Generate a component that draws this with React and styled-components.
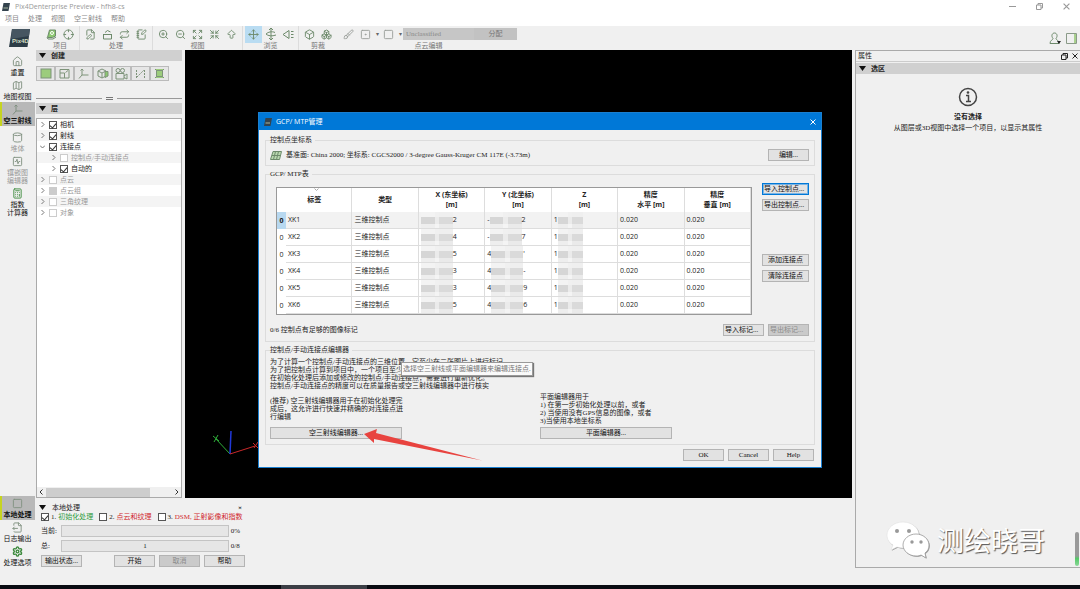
import React from "react";
import styled, { createGlobalStyle, css } from "styled-components";
import {
  ArrowBigUp,
  Box,
  Boxes,
  Brush,
  Calculator,
  Crosshair,
  Cylinder,
  Expand,
  FileOutput,
  FilePen,
  House,
  Map as MapIcon,
  Move,
  NotebookPen,
  Repeat,
  Settings,
  Shrink,
  Square,
  SquareActivity,
  SquareDot,
  ZoomIn,
  ZoomOut,
} from "lucide-react";

const song = '"Liberation Serif", "Noto Sans CJK SC", serif';
const segoe = '"Open Sans", "Noto Sans CJK SC", sans-serif';

const GlobalStyle = createGlobalStyle`
  * {
    box-sizing: border-box;
  }
  body {
    margin: 0;
    background: #f0f0f0;
    color: #222;
    font-family: ${song};
    font-size: 7px;
    line-height: 8px;
  }
  button, input, select {
    font: inherit;
    color: inherit;
    margin: 0;
  }
  svg {
    display: block;
    flex: none;
  }
`;

const Page = styled.div`
  position: relative;
  display: flex;
  flex-direction: column;
  min-height: 100vh;
  overflow: hidden;
`;

/* window chrome */

const TitleBar = styled.header`
  display: flex;
  align-items: center;
  gap: 5px;
  height: 13px;
  padding: 0 10px 0 2px;
  background: #fff;
  color: #999;
  font-family: ${segoe};
`;

const WindowControls = styled.div`
  display: flex;
  gap: 20px;
  margin-left: auto;
`;

const ChromeButton = styled.button`
  display: flex;
  padding: 0;
  border: 0;
  background: none;
  color: ${props => props.$color || "#999"};
`;

const MenuBar = styled.nav`
  display: flex;
  gap: 9px;
  height: 13px;
  padding: 2px 5px;
  background: #fff;
`;

const MenuLink = styled.a`
  color: #888;
  text-decoration: none;
`;

const Toolbar = styled.div`
  display: flex;
  height: 24px;
  background: #f0f0f0;
`;

const LogoCell = styled.div`
  width: 41px;
  padding: 2px 0 0 8px;
`;

const ToolGroup = styled.div`
  display: flex;
  flex-direction: column;
  padding: 0 2px;
  border-right: 1px solid ${props => (props.$open ? "transparent" : "#dcdcdc")};
  color: #777;
  text-align: center;
`;

const Tools = styled.div`
  display: flex;
  align-items: center;
  height: 16px;
`;

const Tool = styled.button`
  display: flex;
  align-items: center;
  justify-content: center;
  width: 17px;
  height: 17px;
  padding: 0;
  border: 0;
  color: ${props => (props.$muted ? "#9a9f9a" : "#6d8a6b")};
  background: ${props => (props.$active ? "#b9dcf2" : "none")};
`;

const Caret = styled.span`
  width: 6px;
  color: #666;
  font-size: 6px;
`;

const ClassSelect = styled.select`
  width: 71px;
  height: 12px;
  padding: 0 3px;
  border: 0;
  border-radius: 0;
  appearance: none;
  background: #c6c6c6;
  color: #8a8a8a;
  opacity: 1;
`;

const AssignButton = styled.button`
  width: 43px;
  height: 12px;
  padding: 0;
  border: 0;
  background: #c2c2c2;
  color: #777;
`;

const Account = styled.div`
  display: flex;
  align-items: center;
  gap: 5px;
  margin-left: auto;
  padding-right: 3px;
`;

/* main area */

const Main = styled.main`
  display: flex;
  flex: 1;
`;

const Rail = styled.nav`
  display: flex;
  flex-direction: column;
  width: 35px;
  margin-right: 1px;
  padding: 4px 0 17px;
`;

const RailGroup = styled.div`
  display: flex;
  flex-direction: column;
  margin-bottom: ${props => (props.$push ? "auto" : "4px")};

  &:last-child {
    margin-bottom: 0;
  }
`;

const RailButton = styled.button`
  display: flex;
  flex-direction: column;
  align-items: center;
  gap: 2px;
  width: 100%;
  padding: 2px 0 1px;
  border: 0;
  background: none;
  color: ${props => (props.disabled ? "#999" : "#111")};
  white-space: pre;

  svg {
    color: ${props => (props.$green ? "#3c8a3c" : "#809080")};
  }

  ${props => props.$active && css`
    background: #b8b8b8;
    box-shadow: inset 2px 0 #c6d420;
    font-weight: 700;
  `}
`;

const Center = styled.div`
  display: flex;
  flex: 1;
  flex-direction: column;
  min-width: 0;
`;

const Workspace = styled.div`
  display: flex;
  flex: 1;
  gap: 3px;
`;

const SideColumn = styled.aside`
  display: flex;
  flex-direction: column;
  width: 146px;
`;

const SectionHead = styled.h2`
  display: flex;
  align-items: center;
  gap: 5px;
  height: 11px;
  margin: 0;
  padding-left: 3px;
  background: #d0d0d0;
  font-size: 7px;
  font-weight: 700;
`;

const CreateTools = styled.div`
  display: flex;
  margin: 5px 0 16px;
`;

const CreateButton = styled.button`
  display: flex;
  align-items: center;
  justify-content: center;
  width: 19px;
  height: 15px;
  padding: 0;
  border: 1px solid #bbb;
  background: #e6e6e6;
  color: #7d9379;
`;

const Splitter = styled.div`
  display: flex;
  align-items: center;
  height: 2px;
  margin-bottom: 4px;

  &::before, &::after {
    content: "";
    flex: 1;
    height: 1px;
    background: #999;
  }
`;

const Grip = styled.span`
  width: 7px;
  height: 3px;
  margin: 0 4px;
  border: solid #777;
  border-width: 1px 0;
`;

const TreeBox = styled.div`
  display: flex;
  flex: 1;
  flex-direction: column;
  margin-top: 4px;
  border: 1px solid #aaa;
  background: #fff;
`;

const Tree = styled.ul`
  flex: 1;
  margin: 0;
  padding: 0;
  list-style: none;
`;

const TreeRow = styled.li`
  display: flex;
  align-items: center;
  gap: 4px;
  height: 11px;
  padding-left: ${props => 3 + props.$level * 11}px;
  color: ${props => (props.$off ? "#999" : "#222")};

  &:nth-child(even) {
    background: #f4f4f4;
  }
`;

const CheckLabel = styled.label`
  display: flex;
  align-items: center;
  gap: ${props => props.$gap || 3}px;
  white-space: nowrap;
`;

const Check = styled.input.attrs({ type: "checkbox" })`
  display: flex;
  flex: none;
  justify-content: center;
  width: 8px;
  height: 8px;
  border: 1px solid ${props => (props.$faint ? "#ccc" : "#555")};
  appearance: none;
  background: ${props => (props.$mixed ? "#ccc" : "#fff")};

  &:checked::after {
    content: "";
    width: 3px;
    height: 5px;
    border: solid #333;
    border-width: 0 1px 1px 0;
    transform: rotate(40deg);
  }
`;

const ScrollTrack = styled.div`
  display: flex;
  align-items: center;
  gap: 3px;
  height: 10px;
  padding: 0 2px;
  background: #f0f0f0;
`;

const ScrollThumb = styled.div`
  width: 104px;
  height: 9px;
  margin-right: auto;
  background: #cdcdcd;
`;

const Viewport = styled.section`
  position: relative;
  flex: 1;
  background: #000;
`;

const Axes = styled.svg`
  position: absolute;
  bottom: 38px;
  left: 25px;
`;

/* processing dock */

const Dock = styled.section`
  width: 209px;
  height: 87px;
  padding-top: 5px;
`;

const DockHead = styled.div`
  display: flex;
  align-items: center;
  gap: 6px;
  height: 9px;
  padding: 0 3px;
`;

const DockClose = styled.button`
  margin-left: auto;
  padding: 0;
  border: 0;
  background: none;
  font-weight: 700;
`;

const Steps = styled.div`
  display: flex;
  gap: 6px;
  height: 10px;
  padding-left: 5px;
`;

const StepName = styled.span`
  color: ${props => props.$color};
`;

const ProgressRow = styled.div`
  display: grid;
  grid-template-columns: 20px 168px 1fr;
  align-items: center;
  height: 12px;
  margin-top: 3px;
  padding-left: 5px;
`;

const Bar = styled.div`
  height: 12px;
  border: 1px solid #c4c4c4;
  background: #e6e6e6;
  line-height: 10px;
  text-align: center;
`;

const DockButtons = styled.div`
  display: flex;
  gap: 4px;
  margin-top: 3px;
  padding-left: 5px;
`;

const Button = styled.button`
  width: ${props => props.$width || 41}px;
  height: 12px;
  padding: 0 1px;
  overflow: hidden;
  border: 1px solid ${props => (props.$focus ? "#0078d7" : "#b4b4b4")};
  background: ${props => (props.disabled ? "#cacaca" : "#e2e2e2")};
  box-shadow: ${props => (props.$focus ? "inset 0 0 0 1px #7ab4e4" : "none")};
  color: ${props => (props.disabled ? "#8a8a8a" : "#111")};
  line-height: 10px;
  text-align: ${props => (props.$left ? "left" : "center")};
  white-space: nowrap;
`;

const StatusButton = styled(Button)`
  margin-right: auto;
`;

/* properties */

const Properties = styled.aside`
  width: 225px;
  margin: 0 0 17px 3px;
  border: solid #aaa;
  border-width: 1px 0 1px 1px;
`;

const PropertiesHead = styled.div`
  display: flex;
  align-items: center;
  gap: 4px;
  height: 11px;
  margin-bottom: 1px;
  padding: 0 2px;
  border-bottom: 1px solid #ccc;
`;

const HeadTitle = styled.span`
  margin-right: auto;
`;

const Empty = styled.div`
  display: flex;
  flex-direction: column;
  align-items: center;
  padding-top: 13px;
`;

const EmptyTitle = styled.strong`
  margin: 6px 0 3px;
`;

const PropertiesScroll = styled.div`
  position: absolute;
  right: 1px;
  bottom: 23px;
  width: 4px;
  height: 34px;
  border-radius: 2px;
  background: linear-gradient(#999 70%, #55c868 78%, #8ad898);
`;

const Watermark = styled.div`
  position: absolute;
  right: 35px;
  bottom: 30px;
  display: flex;
  align-items: center;
  gap: 7px;
  color: #fff;
  font-family: "Noto Sans CJK SC", sans-serif;
  font-size: 27px;
  line-height: 36px;
  text-shadow: 1px 1px 1px #555;
`;

const TaskBar = styled.footer`
  height: 4px;
  background: linear-gradient(90deg, #090b12 26%, #3b3e45 26%, #3b3e45 34%, #090b12 34%);
`;

/* dialog */

const Overlay = styled.div`
  position: absolute;
  inset: 0;
  display: flex;
  align-items: center;
  justify-content: center;
  padding-bottom: 9px;
`;

const Dialog = styled.section`
  position: relative;
  width: 564px;
  border: 1px solid #1a7fd0;
  background: #f0f0f0;
`;

const DialogTitle = styled.header`
  display: flex;
  align-items: center;
  justify-content: space-between;
  height: 17px;
  padding: 0 5px;
  background: #0078d7;
  color: #fff;
  font-family: ${segoe};
`;

const TitleText = styled.span`
  display: flex;
  gap: 4px;
`;

const DialogBody = styled.div`
  display: flex;
  flex-direction: column;
  gap: 3px;
  padding: 5px 6px 0;
`;

const GroupBox = styled.fieldset`
  min-width: 0;
  margin: 0;
  padding: ${props => props.$padding};
  border: 1px solid #dcdcdc;
`;

const Legend = styled.legend`
  padding: 0 3px 0 0;
  line-height: 10px;
`;

const SystemRow = styled.div`
  display: flex;
  align-items: center;
  gap: 4px;
`;

const SystemText = styled.span`
  margin-right: auto;
`;

const TableRow = styled.div`
  display: flex;
  gap: 10px;
  padding-left: 6px;
`;

const TableWrap = styled.div`
  flex: 1;
  min-width: 0;
  padding-top: 4px;
`;

const PointTable = styled.table`
  width: 100%;
  height: 128px;
  border: 1px solid #999;
  border-collapse: separate;
  border-spacing: 0;
  table-layout: fixed;
  background: #fff;
  font-family: ${segoe};

  th, td {
    padding: 0 0 0 2px;
    border: solid #ddd;
    border-width: 0 1px 1px 0;
    text-align: left;
    white-space: nowrap;
  }
  thead th {
    position: relative;
    height: 24px;
    padding: 0;
    border-bottom: 0;
    line-height: 10px;
    text-align: center;
  }
  tbody tr {
    height: 17px;
  }
  tbody th {
    padding: 0;
    border: 0;
    font-weight: 400;
    text-align: center;
  }
  tbody tr:first-child {
    background: #f2f2f2;
  }
  tbody tr:first-child th {
    background: #b7d8f0;
    font-weight: 700;
  }
`;

const Col = styled.col`
  width: ${props => props.$width};
`;

const SortMark = styled.svg`
  position: absolute;
  top: 0;
  left: 50%;
`;

const Masked = styled.div`
  display: flex;
  align-items: center;
  height: 16px;
`;

const Mosaic = styled.span`
  display: grid;
  grid-template-columns: 3fr 1fr 3fr;
  grid-template-rows: 5px 7px 4px;
  width: ${props => props.$width}px;
`;

const Pixel = styled.i`
  background: ${props => props.$shade};
`;

const SideButtons = styled.div`
  display: flex;
  flex-direction: column;
  gap: 4px;
`;

const LowerButtons = styled(SideButtons)`
  margin-top: 43px;
`;

const StatusRow = styled.div`
  display: flex;
  align-items: center;
  gap: 4px;
  margin-top: 9px;
`;

const Intro = styled.p`
  margin: 0;
  white-space: pre;
`;

const Editors = styled.div`
  display: grid;
  grid-template-columns: 1fr 1fr;
  grid-template-rows: 37px 12px;
  align-items: center;
`;

const DialogFooter = styled.footer`
  display: flex;
  gap: 4px;
  justify-content: flex-end;
  padding: 4px 7px 6px;
`;

const Tooltip = styled.div`
  position: absolute;
  top: 249px;
  left: 142px;
  padding: 2px 1px;
  border: 1px solid #999;
  background: #fafafa;
  box-shadow: 1px 1px 1px #777;
  color: #777;
  white-space: nowrap;
`;

const Arrow = styled.svg`
  position: absolute;
  top: 315px;
  left: 103px;
`;

const icon = { size: 11, strokeWidth: 2 };

const Triangle = () => (
  <svg width="7" height="5" viewBox="0 0 7 5"><path d="M0 0h7L3.500 5z" fill="#111" /></svg>
);

const CloseIcon = ({ size = 6 }) => (
  <svg width={size} height={size} viewBox="0 0 6 6" stroke="currentColor" fill="none">
    <path d="M.5.5l5 5M5.500.5l-5 5" />
  </svg>
);

const RestoreIcon = () => (
  <svg width="7" height="7" viewBox="0 0 7 7" stroke="currentColor" fill="none">
    <path d="M.5 2h4.500v4.500H.5zM2 2V.5h4.500V5H5" />
  </svg>
);

const Chevron = ({ open }) => (
  <svg width="5" height="5" viewBox="0 0 5 5" stroke="#777" fill="none">
    <path d={open ? "M0 1.500l2.500 2.500L5 1.500" : "M1.500 0L4 2.500 1.500 5"} />
  </svg>
);

const AppMark = ({ size = 8 }) => (
  <svg width={size} height={size} viewBox="0 0 8 8">
    <path d="M1.500 0H8L6.500 8H0z" fill="#34434e" />
    <path d="M1.500 5h4.500" stroke="#a8b8a0" />
  </svg>
);

const Logo = () => (
  <svg width="23" height="20" viewBox="0 0 23 20">
    <path d="M4 1h18l-2.500 18H1z" fill="#2c3c46" />
    <path d="M4 1h18l-1 7L3 11z" fill="#465661" />
    <text x="4" y="15" fill="#d5dfc4" fontFamily="Liberation Sans" fontSize="6" fontWeight="700">Pix4D</text>
  </svg>
);

const LayersGlyph = () => (
  <svg width="11" height="11" viewBox="0 0 11 11" fill="none" stroke="currentColor">
    <path d="M3.500 1h6v6l-3 1.500h-5z" fill="#8cc870" />
    <circle cx="6" cy="4" r="1.500" stroke="#fff" />
    <path d="M1 8.500l1 1.500h5l3-2" />
  </svg>
);

const TrayGlyph = () => (
  <svg width="11" height="11" viewBox="0 0 11 11" fill="none" stroke="currentColor">
    <path d="M1.500 5.500h8V10h-8zM1 5.500h9M3 3.500l2.500-2 3 1.500" />
  </svg>
);

const OrbitGlyph = () => (
  <svg width="12" height="12" viewBox="0 0 12 12" fill="none" stroke="currentColor">
    <path d="M6 0v12M4 2l2-2 2 2M4 10l2 2 2-2M10 4.500C7 3 3 4 1 6c2 2 6 2.500 10 1" />
  </svg>
);

const FirstPersonGlyph = () => (
  <svg width="12" height="11" viewBox="0 0 12 11" fill="none" stroke="currentColor">
    <path d="M7 1.500L1 5.500l6 4zM9 2.500h2.500M9 5.500h2.500M9 8.500h2.500" />
  </svg>
);

const AxesGlyph = ({ size = 11 }) => (
  <svg width={size} height={size} viewBox="0 0 11 11" fill="none" stroke="currentColor">
    <path d="M4 1v6h6.500M4 7L1 10.500M2.500 2.500L4 1l1.500 1.500" />
  </svg>
);

const OrthoGlyph = () => (
  <svg width="12" height="11" viewBox="0 0 12 11" fill="#9ccc7c" stroke="currentColor">
    <rect x="1" y="1" width="10" height="9" />
  </svg>
);

const ScaleGlyph = () => (
  <svg width="11" height="11" viewBox="0 0 11 11" fill="none" stroke="currentColor">
    <path d="M1 1.500h9v8.500H1zM1 5h4.500v5M6.500 4.500L9 2.500" />
  </svg>
);

const VolumeGlyph = () => (
  <svg width="12" height="11" viewBox="0 0 12 11" fill="none" stroke="currentColor">
    <path d="M1 3l4-2 4 2v5L5 10 1 8zM1 3l4 2v5M5 5l4-2" />
    <path d="M8 3.500h3V8L8 9.500z" fill="#8cc870" />
  </svg>
);

const CameraGlyph = () => (
  <svg width="13" height="12" viewBox="0 0 13 12" fill="none" stroke="currentColor">
    <circle cx="3" cy="2.500" r="2" />
    <circle cx="7.500" cy="2.500" r="2" />
    <path d="M1 5.500h8V11H1zM9 8l3-2v5L9 9.500" />
  </svg>
);

const PolylineGlyph = () => (
  <svg width="11" height="11" viewBox="0 0 11 11" fill="none" stroke="currentColor">
    <path d="M1.500 10V1.500M9.500 10V1.500M2 9l7-7" strokeDasharray="2 1" />
  </svg>
);

const SurfaceGlyph = () => (
  <svg width="11" height="11" viewBox="0 0 11 11" fill="#9ccc7c" stroke="currentColor">
    <path d="M1 1l1.500 1.500h6L10 1M1 10l1.500-1.500h6L10 10M2.500 2.500v6M8.500 2.500v6" />
    <path d="M2.500 2.500h6v6h-6z" />
  </svg>
);

const UserGlyph = () => (
  <svg width="12" height="13" viewBox="0 0 12 13" fill="none" stroke="#6d8a6b">
    <path d="M4 6.500C2 4 3 1 5.500 1S9 4 7 6.500c0 1.500 3 1.500 3 5H1c0-3.500 3-3.500 3-5z" />
    <path d="M8 9h4l-2 3z" fill="#222" stroke="none" />
  </svg>
);

const PanelGlyph = () => (
  <svg width="11" height="11" viewBox="0 0 11 11" fill="none" stroke="#8a9a88">
    <path d="M.5.5h10v10H.5z" />
    <path d="M8 1h2v9H8z" fill="#a9d08e" stroke="none" />
  </svg>
);

const InfoIcon = () => (
  <svg width="20" height="20" viewBox="0 0 20 20" fill="none" stroke="#444">
    <circle cx="10" cy="10" r="8.500" strokeWidth="1.500" />
    <path d="M8 8.500h2.500v5.500M8 14.500h5" strokeWidth="1.500" />
    <circle cx="10" cy="5.500" r="1.300" fill="#444" stroke="none" />
  </svg>
);

const SystemGlyph = () => (
  <svg width="12" height="9" viewBox="0 0 12 9" fill="#b9d8b0" stroke="#6d8a6b">
    <path d="M3 .5h8.500l-2 8H.5zM5.500.5l-2 8M8.500.5l-2 8M2 4.500h8.500" />
  </svg>
);

const ChatLogo = () => (
  <svg width="44" height="38" viewBox="0 0 44 38">
    <g fill="#999" transform="translate(.8 .8)">
      <path d="M17 1C8 1 1 7 1 14c0 4 2 8 6 10l-2 5 6-3c2 .7 4 1 6 1 9 0 16-6 16-13S26 1 17 1z" />
      <path d="M30 13c-7 0-13 5-13 11s6 11 13 11c2 0 4-.3 5-1l5 3-1-5c3-2 4-5 4-8 0-6-6-11-13-11z" />
    </g>
    <path
      d="M17 1C8 1 1 7 1 14c0 4 2 8 6 10l-2 5 6-3c2 .7 4 1 6 1 9 0 16-6 16-13S26 1 17 1z"
      fill="#fff"
      stroke="#ddd"
      strokeWidth=".5"
    />
    <path
      d="M30 13c-7 0-13 5-13 11s6 11 13 11c2 0 4-.3 5-1l5 3-1-5c3-2 4-5 4-8 0-6-6-11-13-11z"
      fill="#fff"
      stroke="#999"
      strokeWidth=".8"
    />
    <g fill="#999">
      <circle cx="11" cy="10" r="2" /><circle cx="23" cy="10" r="2" />
      <circle cx="26" cy="21" r="1.700" /><circle cx="35" cy="21" r="1.700" />
    </g>
  </svg>
);

const menus = ["项目", "处理", "视图", "空三射线", "帮助"];

const toolGroups = [
  { label: "项目", tools: [["图层", <LayersGlyph />], ["坐标", <Crosshair {...icon} />]] },
  {
    label: "处理",
    tools: [
      ["新建", <FilePen {...icon} />],
      ["打开", <TrayGlyph />],
      ["重做", <Repeat {...icon} />],
      ["报告", <NotebookPen {...icon} />],
    ],
  },
  {
    label: "视图",
    tools: [
      ["放大", <ZoomIn {...icon} />],
      ["缩小", <ZoomOut {...icon} />],
      ["全部", <Expand {...icon} />],
      ["聚焦", <Shrink {...icon} />],
      ["向上", <ArrowBigUp {...icon} />],
    ],
  },
  {
    label: "浏览",
    active: 0,
    tools: [
      ["平移", <Move {...icon} />],
      ["环绕", <OrbitGlyph />],
      ["第一人称", <FirstPersonGlyph />],
    ],
  },
  { label: "剪裁", open: true, tools: [["剪裁框", <Box {...icon} />], ["编辑框", <Boxes {...icon} />]] },
];

const createTools = [
  ["正射", <OrthoGlyph />],
  ["比例", <ScaleGlyph />],
  ["方向", <AxesGlyph />],
  ["体积", <VolumeGlyph />],
  ["动画", <CameraGlyph />],
  ["折线", <PolylineGlyph />],
  ["平面", <SurfaceGlyph />],
];

const layers = [
  { name: "相机", checked: true },
  { name: "射线", checked: true },
  { name: "连接点", checked: true, open: true },
  { name: "控制点/手动连接点", level: 1, off: true },
  { name: "自动的", level: 1, checked: true },
  { name: "点云", off: true },
  { name: "点云组", off: true, mixed: true },
  { name: "三角纹理", off: true },
  { name: "对象", off: true },
];

const columns = [
  ["标签"],
  ["类型"],
  ["X (东坐标)", "[m]"],
  ["Y (北坐标)", "[m]"],
  ["Z", "[m]"],
  ["精度", "水平 [m]"],
  ["精度", "垂直 [m]"],
];

const points = [
  { name: "XK1", x: "2", y: ["-", "2"] },
  { name: "XK2", x: "4", y: ["-", "7"] },
  { name: "XK3", x: "5", y: ["4", "'"] },
  { name: "XK4", x: "3", y: ["4", "-"] },
  { name: "XK5", x: "3", y: ["4", "9"] },
  { name: "XK6", x: "5", y: ["4", "6"] },
];

const shades = ["#f3f3f3", "#f0f0f0", "#efefef", "#d6d6d6", "#ebebeb", "#dadada", "#eee", "#f4f4f4", "#eaeaea"];

const Mask = ({ width }) => (
  <Mosaic $width={width}>
    {shades.map((shade, i) => <Pixel key={i} $shade={shade} />)}
  </Mosaic>
);

const ControlPoints = () => (
  <PointTable>
    <colgroup>
      <Col $width="9px" />
      {columns.map((_, i) => <Col key={i} />)}
    </colgroup>
    <thead>
      <tr>
        {columns.map((lines, i) => (
          <th key={i} colSpan={i === 0 ? 2 : 1} scope="col">
            {i === 0 && (
              <SortMark width="5" height="3" viewBox="0 0 5 3" fill="none" stroke="#aaa"><path d="M.5.5l2 2 2-2" /></SortMark>
            )}
            {lines[0]}
            {lines[1] && <><br />{lines[1]}</>}
          </th>
        ))}
      </tr>
    </thead>
    <tbody>
      {points.map(point => (
        <tr key={point.name}>
          <th scope="row">0</th>
          <td>{point.name}</td>
          <td>三维控制点</td>
          <td><Masked><Mask width={32} />{point.x}</Masked></td>
          <td><Masked>{point.y[0]}<Mask width={32} />{point.y[1]}</Masked></td>
          <td><Masked>1<Mask width={25} /></Masked></td>
          <td>0.020</td>
          <td>0.020</td>
        </tr>
      ))}
    </tbody>
  </PointTable>
);

const GcpDialog = () => (
  <Overlay>
    <Dialog role="dialog" aria-label="GCP/ MTP管理">
      <DialogTitle>
        <TitleText><AppMark />GCP/ MTP管理</TitleText>
        <ChromeButton $color="#fff" aria-label="关闭"><CloseIcon /></ChromeButton>
      </DialogTitle>
      <DialogBody>
        <GroupBox $padding="4px 5px 4px 4px">
          <Legend>控制点坐标系</Legend>
          <SystemRow>
            <SystemGlyph />
            <SystemText>
              基准面: China 2000; 坐标系: CGCS2000 / 3-degree Gauss-Kruger CM 117E (-3.73m)
            </SystemText>
            <Button>编辑...</Button>
          </SystemRow>
        </GroupBox>
        <GroupBox $padding="4px 5px 5px 4px">
          <Legend>GCP/ MTP表</Legend>
          <TableRow>
            <TableWrap>
              <ControlPoints />
            </TableWrap>
            <div>
              <SideButtons>
                <Button $width={47} $left $focus>导入控制点...</Button>
                <Button $width={47} $left>导出控制点...</Button>
              </SideButtons>
              <LowerButtons>
                <Button $width={47}>添加连接点</Button>
                <Button $width={47}>清除连接点</Button>
              </LowerButtons>
            </div>
          </TableRow>
          <StatusRow>
            <SystemText>0/6 控制点有足够的图像标记</SystemText>
            <Button $left>导入标记...</Button>
            <Button $left disabled>导出标记...</Button>
          </StatusRow>
        </GroupBox>
        <GroupBox $padding="3px 4px 5px">
          <Legend>控制点/手动连接点编辑器</Legend>
          <Intro>
            {"为了计算一个控制点/手动连接点的三维位置，它至少在二张图片上进行标记。\n"}
            {"为了把控制点计算到项目中，一个项目至少\n"}
            {"在初始化处理后添加或修改的控制点/手动连接点，需要进行重新优化。\n"}
            {"控制点/手动连接点的精度可以在质量报告或空三射线编辑器中进行核实"}
          </Intro>
          <Editors>
            <Intro>{"(推荐) 空三射线编辑器用于在初始化处理完\n成后，这允许进行快速并精确的对连接点进\n行编辑"}</Intro>
            <Intro>{"平面编辑器用于\n1) 在第一步初始化处理以前，或者\n2) 当使用没有GPS信息的图像，或者\n3)当使用本地坐标系"}</Intro>
            <Button $width={132}>空三射线编辑器...</Button>
            <Button $width={132}>平面编辑器...</Button>
          </Editors>
        </GroupBox>
      </DialogBody>
      <DialogFooter>
        <Button>OK</Button>
        <Button>Cancel</Button>
        <Button>Help</Button>
      </DialogFooter>
      <Tooltip role="tooltip">选择空三射线或平面编辑器来编辑连接点.</Tooltip>
      <Arrow width="122" height="34" viewBox="0 0 122 34">
        <path d="M2 6L15 1l-1 4 106 27.500L12 11l0 4z" fill="#e8433f" />
      </Arrow>
    </Dialog>
  </Overlay>
);

const ProcessingDock = () => (
  <Dock>
    <DockHead>
      <Triangle />
      <span>本地处理</span>
      <DockClose aria-label="关闭">×</DockClose>
    </DockHead>
    <Steps>
      <CheckLabel $gap={2}><Check defaultChecked />1. <StepName $color="#2c9a3c">初始化处理</StepName></CheckLabel>
      <CheckLabel $gap={2}><Check />2. <StepName $color="#d0282e">点云和纹理</StepName></CheckLabel>
      <CheckLabel $gap={2}><Check />3. <StepName $color="#d0282e">DSM, 正射影像和指数</StepName></CheckLabel>
    </Steps>
    <ProgressRow>
      <span>当前:</span>
      <Bar role="progressbar" aria-label="当前" aria-valuenow={0} />
      <span>&nbsp;0%</span>
    </ProgressRow>
    <ProgressRow>
      <span>总:</span>
      <Bar role="progressbar" aria-label="总" aria-valuenow={0}>1</Bar>
      <span>&nbsp;0/8</span>
    </ProgressRow>
    <DockButtons>
      <StatusButton>输出状态...</StatusButton>
      <Button>开始</Button>
      <Button disabled>取消</Button>
      <Button>帮助</Button>
    </DockButtons>
  </Dock>
);

const App = () => (
  <>
    <GlobalStyle />
    <Page>
      <TitleBar>
        <AppMark />
        <span>Pix4Denterprise Preview - hfh8-cs</span>
        <WindowControls>
          <ChromeButton aria-label="最小化">
            <svg width="7" height="7" viewBox="0 0 7 7" stroke="currentColor"><path d="M0 3.500h7" /></svg>
          </ChromeButton>
          <ChromeButton aria-label="还原"><RestoreIcon /></ChromeButton>
          <ChromeButton aria-label="关闭"><CloseIcon size={7} /></ChromeButton>
        </WindowControls>
      </TitleBar>
      <MenuBar>
        {menus.map(name => <MenuLink key={name} href="#">{name}</MenuLink>)}
      </MenuBar>
      <Toolbar>
        <LogoCell><Logo /></LogoCell>
        {toolGroups.map(group => (
          <ToolGroup key={group.label} $open={group.open}>
            <Tools>
              {group.tools.map(([name, glyph], i) => (
                <Tool key={name} aria-label={name} $active={group.active === i}>{glyph}</Tool>
              ))}
            </Tools>
            {group.label}
          </ToolGroup>
        ))}
        <ToolGroup $open>
          <Tools>
            <Tool aria-label="画笔" $muted><Brush {...icon} /></Tool>
            <Tool aria-label="选点" $muted><SquareDot {...icon} /></Tool>
            <Caret>▾</Caret>
            <Tool aria-label="选框" $muted><Square {...icon} /></Tool>
            <Caret>▾</Caret>
            <ClassSelect aria-label="点云分类" disabled><option>Unclassified</option></ClassSelect>
            <AssignButton disabled>分配</AssignButton>
          </Tools>
          点云编辑
        </ToolGroup>
        <Account>
          <ChromeButton aria-label="用户"><UserGlyph /></ChromeButton>
          <ChromeButton aria-label="面板"><PanelGlyph /></ChromeButton>
        </Account>
      </Toolbar>
      <Main>
        <Rail>
          <RailGroup>
            <RailButton><House {...icon} />重置</RailButton>
            <RailButton><MapIcon {...icon} />地图视图</RailButton>
            <RailButton $active><AxesGlyph />空三射线</RailButton>
          </RailGroup>
          <RailGroup $push>
            <RailButton disabled><Cylinder {...icon} />堆体</RailButton>
            <RailButton disabled><SquareActivity {...icon} />{"镶嵌图\n编辑器"}</RailButton>
            <RailButton $green><Calculator {...icon} />{"指数\n计算器"}</RailButton>
          </RailGroup>
          <RailGroup>
            <RailButton $active><Square {...icon} />本地处理</RailButton>
            <RailButton><FileOutput {...icon} />日志输出</RailButton>
            <RailButton $green><Settings size={11} strokeWidth={3} />处理选项</RailButton>
          </RailGroup>
        </Rail>
        <Center>
          <Workspace>
            <SideColumn>
              <SectionHead><Triangle />创建</SectionHead>
              <CreateTools>
                {createTools.map(([name, glyph]) => (
                  <CreateButton key={name} aria-label={name}>{glyph}</CreateButton>
                ))}
              </CreateTools>
              <Splitter><Grip /></Splitter>
              <SectionHead><Triangle />层</SectionHead>
              <TreeBox>
                <Tree>
                  {layers.map(layer => (
                    <TreeRow key={layer.name} $level={layer.level || 0} $off={layer.off}>
                      <Chevron open={layer.open} />
                      <CheckLabel>
                        <Check defaultChecked={layer.checked} $faint={layer.off} $mixed={layer.mixed} />
                        {layer.name}
                      </CheckLabel>
                    </TreeRow>
                  ))}
                </Tree>
                <ScrollTrack>
                  <svg width="4" height="6" viewBox="0 0 4 6" stroke="#333" fill="none"><path d="M3.500.5L1 3l2.500 2.500" /></svg>
                  <ScrollThumb />
                  <svg width="4" height="6" viewBox="0 0 4 6" stroke="#333" fill="none"><path d="M.5.5L3 3 .5 5.500" /></svg>
                </ScrollTrack>
              </TreeBox>
            </SideColumn>
            <Viewport>
              <Axes width="50" height="30" viewBox="0 0 50 30" fill="none">
                <path d="M20 24L6 9M3 6l6 5M8 5L4 12" stroke="#2fae3a" />
                <path d="M20 24l1-23" stroke="#2038d8" strokeWidth="1.500" />
                <path d="M20 24l25-8M43 13l5 5M48 12l-4 6" stroke="#c8282a" />
              </Axes>
            </Viewport>
          </Workspace>
          <ProcessingDock />
        </Center>
        <Properties>
          <PropertiesHead>
            <HeadTitle>属性</HeadTitle>
            <ChromeButton aria-label="浮动" $color="#222"><RestoreIcon /></ChromeButton>
            <ChromeButton aria-label="关闭" $color="#222"><CloseIcon /></ChromeButton>
          </PropertiesHead>
          <SectionHead><Triangle />选区</SectionHead>
          <Empty>
            <InfoIcon />
            <EmptyTitle>没有选择</EmptyTitle>
            <span>从图层或3D视图中选择一个项目，以显示其属性</span>
          </Empty>
        </Properties>
      </Main>
      <TaskBar />
      <PropertiesScroll />
      <Watermark><ChatLogo />测绘晓哥</Watermark>
      <GcpDialog />
    </Page>
  </>
);

export default App;
